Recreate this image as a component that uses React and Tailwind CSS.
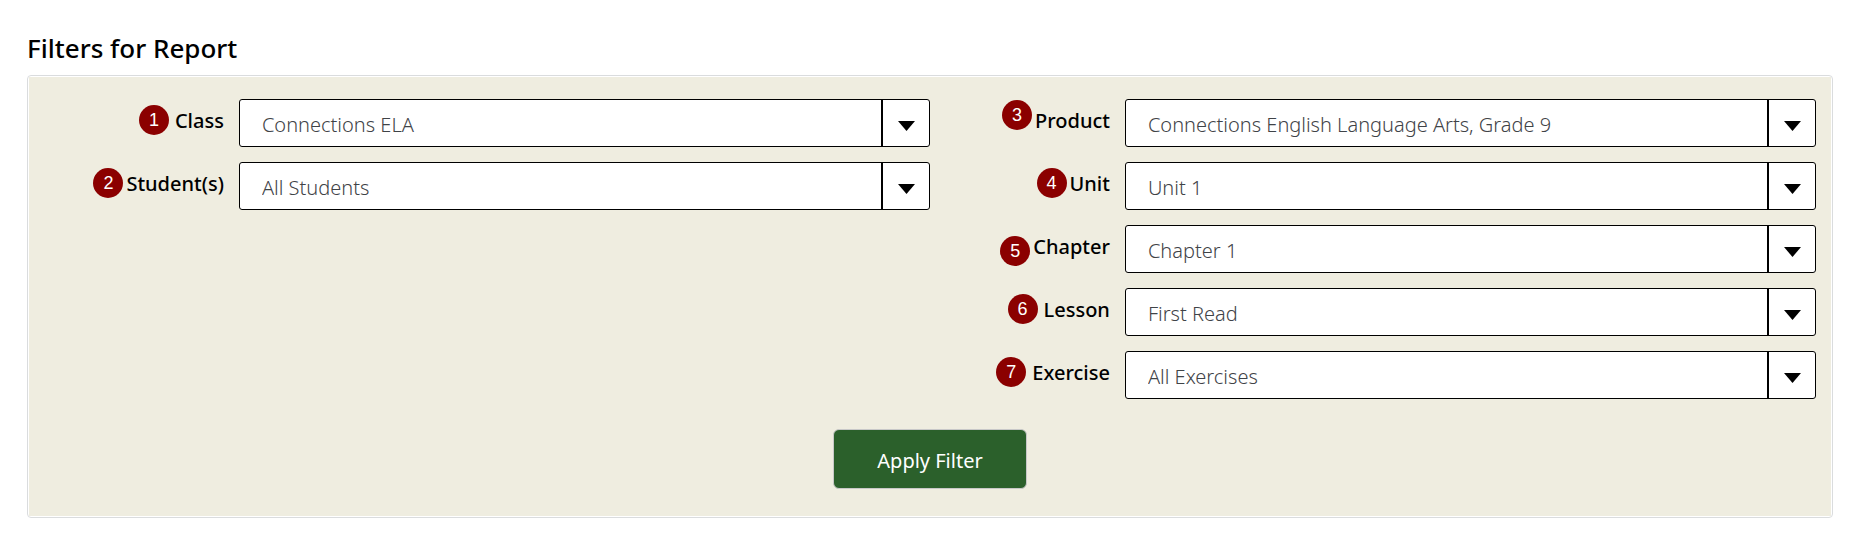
const classFilters = [
  { id: 'class', badge: 1, label: 'Class', value: 'Connections ELA', gap: 'gap-1.5', align: 'self-center' },
  { id: 'students', badge: 2, label: 'Student(s)', value: 'All Students', gap: 'gap-[3px]', align: 'self-center' },
];

const productFilters = [
  { id: 'product', badge: 3, label: 'Product', value: 'Connections English Language Arts, Grade 9', gap: 'gap-[3px]', align: 'self-start' },
  { id: 'unit', badge: 4, label: 'Unit', value: 'Unit 1', gap: 'gap-[3px]', align: 'self-center' },
  { id: 'chapter', badge: 5, label: 'Chapter', value: 'Chapter 1', gap: 'gap-[3px]', align: 'self-end' },
  { id: 'lesson', badge: 6, label: 'Lesson', value: 'First Read', gap: 'gap-1.5', align: 'self-center' },
  { id: 'exercise', badge: 7, label: 'Exercise', value: 'All Exercises', gap: 'gap-1.5', align: 'self-center' },
];

function FilterRow({ id, badge, label, value, gap, align }) {
  return (
    <div className="flex">
      <div className={`mt-px flex h-10 w-[22%] shrink-0 items-center justify-end pr-[15px] ${gap}`}>
        <span
          className={`flex size-[30px] shrink-0 items-center justify-center rounded-full bg-[#8b0000] font-['Liberation_Sans',sans-serif] text-[18px] text-white ${align}`}
        >
          {badge}
        </span>
        <label htmlFor={id} className="pt-0.5 text-[20px] leading-7 font-medium text-black">
          {label}
        </label>
      </div>
      <div className="relative min-w-0 flex-1">
        <select
          id={id}
          className="block h-12 w-full appearance-none rounded-[3px] border border-black bg-white pt-1 pr-14 pl-[22px] text-[20px] font-light text-[#3f4347]"
        >
          <option>{value}</option>
        </select>
        <span className="pointer-events-none absolute inset-y-0 right-0 flex w-[49px] items-center justify-center border-l-2 border-black pt-1.5">
          <svg width="17" height="10" viewBox="0 0 17 10" aria-hidden="true">
            <path d="M0 0H17L8.5 10Z" fill="#000" />
          </svg>
        </span>
      </div>
    </div>
  );
}

function FilterColumn({ filters }) {
  return (
    <div className="flex flex-col gap-[15px]">
      {filters.map((filter) => (
        <FilterRow key={filter.id} {...filter} />
      ))}
    </div>
  );
}

export default function App() {
  return (
    <main className="bg-white pt-[31px] pr-[22px] pb-8 pl-[27px] font-['Noto_Sans',sans-serif]">
      <h1 className="mb-[10px] text-[26px] leading-[34px] font-medium text-black">Filters for Report</h1>
      <form
        className="rounded-[4px] border border-[#dadcde] bg-white p-px"
        onSubmit={(event) => event.preventDefault()}
      >
        <div className="flex flex-col items-center bg-[#efede0] px-[15px] pt-[22px] pb-[27px]">
          <div className="grid w-full grid-cols-2">
            <FilterColumn filters={classFilters} />
            <FilterColumn filters={productFilters} />
          </div>
          <button
            type="submit"
            className="mt-[30px] h-[60px] rounded-[6px] border border-[#c8c8c8] bg-[#2b602b] px-[43px] pt-1 text-[20px] text-white"
          >
            Apply Filter
          </button>
        </div>
      </form>
    </main>
  );
}
